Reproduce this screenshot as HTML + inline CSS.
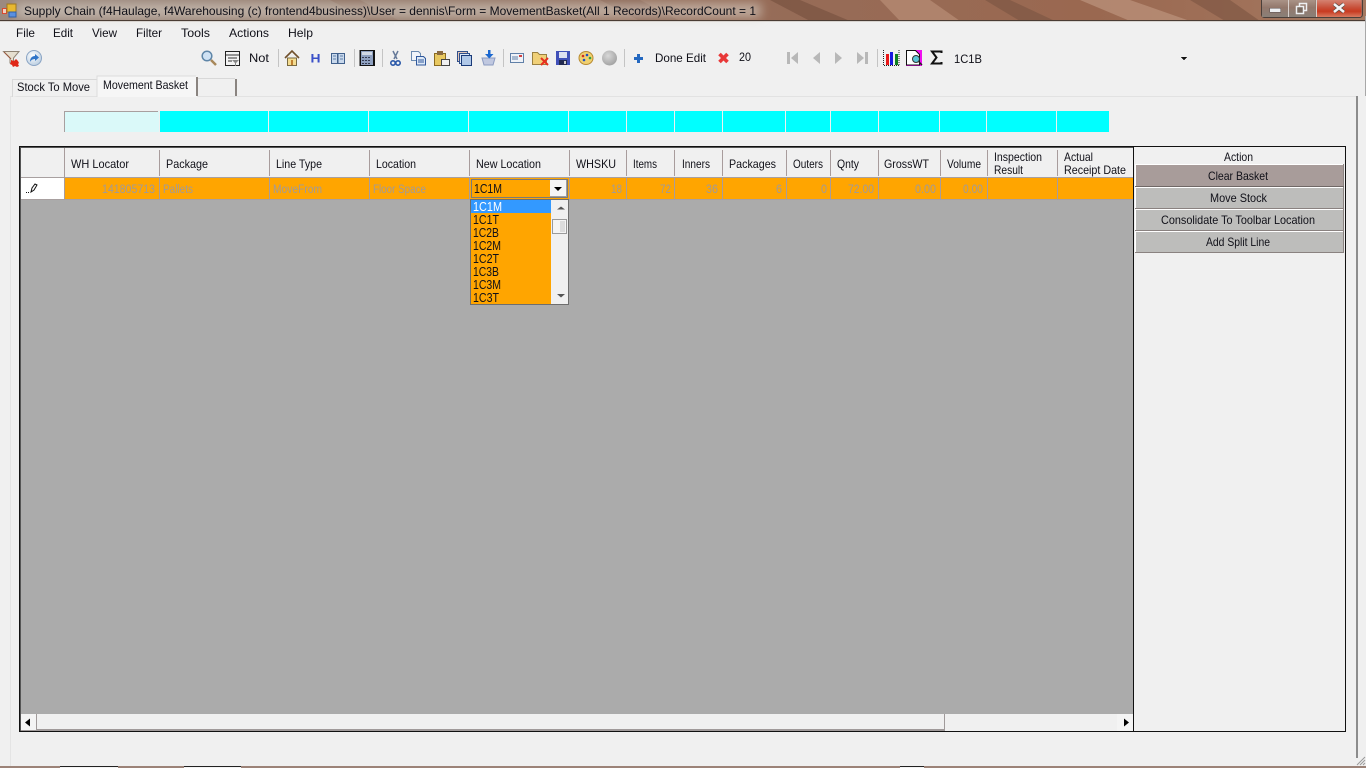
<!DOCTYPE html>
<html><head><meta charset="utf-8"><title>Supply Chain</title>
<style>
html,body{margin:0;padding:0;width:1366px;height:768px;overflow:hidden;background:#f0f0f0}
svg{display:block}
text{font-family:"Liberation Sans",sans-serif;font-size:12px;fill:#101018;white-space:pre}
.c{shape-rendering:crispEdges}
.g{fill:#a09a9a;font-size:11.5px}
.d{font-size:12.500px}
</style></head><body>
<svg width="1366" height="768" viewBox="0 0 1366 768" xmlns="http://www.w3.org/2000/svg">
<defs>
<linearGradient id="tb" x1="0" y1="0" x2="1" y2="0"><stop offset="0" stop-color="#9c8a80"/><stop offset=".3" stop-color="#94796a"/><stop offset=".55" stop-color="#966c58"/><stop offset=".8" stop-color="#9a6850"/><stop offset="1" stop-color="#a47860"/></linearGradient>
<linearGradient id="cl" x1="0" y1="0" x2="0" y2="1"><stop offset="0" stop-color="#d89080"/><stop offset=".5" stop-color="#c8503a"/><stop offset=".7" stop-color="#c83a20"/><stop offset="1" stop-color="#d87a60"/></linearGradient>
<linearGradient id="mn" x1="0" y1="0" x2="0" y2="1"><stop offset="0" stop-color="#b09a8e"/><stop offset=".5" stop-color="#93786c"/><stop offset="1" stop-color="#8a8078"/></linearGradient>
<filter id="bl" x="-10%" y="-100%" width="120%" height="300%"><feGaussianBlur stdDeviation="5"/></filter>
<radialGradient id="ball" cx=".4" cy=".35" r=".7"><stop offset="0" stop-color="#d8d8d8"/><stop offset="1" stop-color="#a0a0a0"/></radialGradient>
<radialGradient id="blue" cx=".4" cy=".35" r=".7"><stop offset="0" stop-color="#ffffff"/><stop offset="1" stop-color="#b8cce0"/></radialGradient>
</defs>

<!-- title bar -->
<rect class="c" width="1366" height="21" fill="url(#tb)"/>
<g opacity=".8">
<polygon points="770,0 800,0 850,21 810,21" fill="#7d5644"/>
<polygon points="880,0 930,0 960,21 900,21" fill="#b58a72"/>
<polygon points="985,0 1010,0 1055,21 1020,21" fill="#825a46"/>
<polygon points="1080,0 1130,0 1190,21 1130,21" fill="#b98f78"/>
<polygon points="1190,0 1230,0 1260,21 1225,21" fill="#845b47"/>
<polygon points="600,0 640,0 680,21 640,21" fill="#86604f"/>
<polygon points="330,0 360,0 400,21 370,21" fill="#8a6a5a"/>
</g>
<rect x="16" y="3" width="745" height="15" fill="#d8d2c8" opacity=".6" filter="url(#bl)"/>
<rect class="c" y="20" width="1366" height="1" fill="#4a3c34"/>
<rect class="c" y="21" width="1366" height="1" fill="#d8d4d0"/>
<!-- app icon -->
<g class="c"><rect x="2" y="8" width="5" height="6" fill="#d84a30"/><rect x="3" y="9" width="3" height="4" fill="#f0d0c0"/><rect x="7" y="4" width="9" height="8" fill="#e8b830" stroke="#a07820" stroke-width="1"/><rect x="9" y="12" width="7" height="5" fill="#5a90e0" stroke="#3060a8" stroke-width="1"/></g>
<text x="24" y="15" textLength="732" lengthAdjust="spacingAndGlyphs">Supply Chain (f4Haulage, f4Warehousing (c) frontend4business)\User = dennis\Form = MovementBasket(All 1 Records)\RecordCount = 1</text>
<!-- window buttons -->
<g>
<rect x="1261.500" y="-2" width="101" height="19.500" rx="3" fill="#8f7568" stroke="#4a3f3a"/>
<rect x="1262" y="-2" width="26" height="19" fill="url(#mn)"/>
<rect x="1289" y="-2" width="26.500" height="19" fill="url(#mn)"/>
<rect x="1316.500" y="-2" width="45" height="19" rx="2" fill="url(#cl)"/>
<rect class="c" x="1288" width="1" height="17" fill="#d8d0cc"/><rect class="c" x="1316" width="1" height="17" fill="#d8d0cc"/>
<rect class="c" x="1269.500" y="8" width="11" height="4" fill="#eef0f2" stroke="#5a5050" stroke-width=".5"/>
<rect x="1299.500" y="3.500" width="7" height="7" fill="none" stroke="#eef0f2" stroke-width="1.500"/>
<rect x="1296.500" y="6.500" width="7" height="7" fill="#7a6a60" stroke="#eef0f2" stroke-width="1.500"/>
<path d="M1334 4 L1344 12 M1344 4 L1334 12" stroke="#5a4a44" stroke-width="4"/>
<path d="M1334 4 L1344 12 M1344 4 L1334 12" stroke="#f4f4f6" stroke-width="2.600"/>
</g>

<!-- menu -->
<text x="16" y="37" textLength="19" lengthAdjust="spacingAndGlyphs">File</text>
<text x="53" y="37" textLength="20" lengthAdjust="spacingAndGlyphs">Edit</text>
<text x="92" y="37" textLength="25" lengthAdjust="spacingAndGlyphs">View</text>
<text x="136" y="37" textLength="26" lengthAdjust="spacingAndGlyphs">Filter</text>
<text x="181" y="37" textLength="29" lengthAdjust="spacingAndGlyphs">Tools</text>
<text x="229" y="37" textLength="40" lengthAdjust="spacingAndGlyphs">Actions</text>
<text x="288" y="37" textLength="25" lengthAdjust="spacingAndGlyphs">Help</text>

<!-- toolbar icons -->
<path d="M3.500 51.500H19L13.500 58V64L10 63V58Z" fill="#e6dfcf" stroke="#8f8474"/>
<path d="M4 52l7 7" stroke="#9a5a40" stroke-width="1"/>
<path d="M11 60l3 1 2-2 2 2 1 2-1 1 1 2-2 1-2-1-2 1-1-2-2-1 1-2z" fill="#e02818"/>
<circle cx="34" cy="58" r="7.500" fill="url(#blue)" stroke="#8aa4c4"/>
<path d="M30 62c0-4 2-6 5-6v-2l4 3.500-4 3.500v-2c-2 0-4 1-5 3z" fill="#2f74c8"/>
<circle cx="207" cy="56" r="4.800" fill="#cfe2f4" stroke="#5f86a8" stroke-width="1.500"/>
<path d="M211 60l5 5" stroke="#a8885a" stroke-width="2.500"/>
<rect class="c" x="225.500" y="51.500" width="14" height="14" fill="#f4f4f4" stroke="#222"/>
<path d="M226 55h13M228 58h9M228 61h4" stroke="#333" fill="none"/>
<path d="M232 60h7l-3 3v3h-1v-3z" fill="#888"/>
<text x="249" y="62" textLength="20" lengthAdjust="spacingAndGlyphs">Not</text>
<rect class="c" x="278" y="49" width="1" height="18" fill="#c4c4c4"/>
<path d="M285 58l7-7 7 7" fill="none" stroke="#70502c" stroke-width="1.600"/>
<rect x="287.500" y="58" width="9" height="7.500" fill="#f4dc90" stroke="#7a6a40"/>
<rect class="c" x="291" y="60" width="2" height="5" fill="#c08030"/>
<text x="310.500" y="62.500" textLength="10" lengthAdjust="spacingAndGlyphs" style="fill:#3a50c8;font-weight:bold">H</text>
<path d="M331.500 53.500h6v10h-6zM338 53.500h6.500v10H338z" fill="#c8d8ec" stroke="#40608c"/>
<path d="M333 56h3M333 59h3M340 56h3M340 59h3" stroke="#6080a8"/>
<rect class="c" x="354" y="49" width="1" height="18" fill="#c4c4c4"/>
<rect class="c" x="359.500" y="50" width="15.500" height="16" fill="#111"/>
<rect class="c" x="361" y="51" width="12" height="14" fill="#8ea0c0"/>
<rect class="c" x="362" y="52" width="10" height="3" fill="#d0d8e4"/>
<path class="c" d="M362 57h2v1h-2zM365 57h2v1h-2zM368 57h2v1h-2zM362 60h2v1h-2zM365 60h2v1h-2zM368 60h2v1h-2zM362 63h2v1h-2zM365 63h2v1h-2zM368 63h2v1h-2z" fill="#333a50"/>
<rect class="c" x="382" y="49" width="1" height="18" fill="#c4c4c4"/>
<path d="M393 51l4 8M398 51l-4 8" stroke="#667a99" stroke-width="1.500"/>
<circle cx="393" cy="63" r="2.200" fill="none" stroke="#2a58a8" stroke-width="1.600"/><circle cx="398" cy="63" r="2.200" fill="none" stroke="#2a58a8" stroke-width="1.600"/>
<path d="M411.500 51.500h7l2 2v7h-9z" fill="#f0f4fa" stroke="#6a8ab0"/>
<path d="M416.500 56.500h7l2 2v6.500h-9z" fill="#dce8f6" stroke="#30589c"/>
<path d="M418 60h6M418 62h6" stroke="#30589c"/>
<rect x="434.500" y="53.500" width="11" height="12" fill="#e8c860" stroke="#8a6a20"/>
<rect class="c" x="437" y="51" width="6" height="4" fill="#8a6a40"/>
<path d="M441.500 59.500h8v6h-8z" fill="#f0f0f0" stroke="#444"/>
<rect x="457.500" y="51.500" width="10" height="10" fill="#e4c8b8" stroke="#30508c"/>
<rect x="459.500" y="53.500" width="10" height="10" fill="#dce8f8" stroke="#30508c"/>
<rect x="461.500" y="55.500" width="10" height="10" fill="#b0c8e8" stroke="#1a3a78"/>
<path d="M482 58h13l-2 7h-9z" fill="#c0c8e0" stroke="#8a9ac0"/>
<path d="M488 50h2.500v4h3l-4.200 4.500-4.300-4.500h3z" fill="#1c68d0"/>
<rect class="c" x="503" y="49" width="1" height="18" fill="#c4c4c4"/>
<rect x="510.500" y="53.500" width="13" height="9" fill="#eef2f8" stroke="#6080a8"/>
<path d="M512 57h6M512 59h6" stroke="#6080a8"/><rect class="c" x="519" y="55" width="3" height="2" fill="#d04040"/>
<path d="M532.500 52.500h5l2 2h7v10h-14z" fill="#f0d078" stroke="#9a8040"/>
<path d="M541 58l7 7M548 58l-7 7" stroke="#e83020" stroke-width="2"/>
<rect class="c" x="556" y="51" width="14" height="14" fill="#4050b8"/>
<rect class="c" x="559" y="52" width="8" height="6" fill="#dde0f0"/>
<rect class="c" x="559" y="60" width="8" height="5" fill="#222a50"/><rect class="c" x="564" y="61" width="2" height="3" fill="#ccc"/>
<ellipse cx="586" cy="58" rx="7" ry="6.500" fill="#f0d070" stroke="#b88a30"/>
<circle cx="583" cy="56" r="1.300" fill="#d03020"/><circle cx="587" cy="55" r="1.300" fill="#2050c0"/><circle cx="590" cy="58" r="1.300" fill="#30a040"/><circle cx="584" cy="60" r="1.300" fill="#2050c0"/>
<circle cx="609.500" cy="58" r="7.500" fill="url(#ball)"/>
<rect class="c" x="624" y="49" width="1" height="18" fill="#c4c4c4"/>
<path class="c" d="M637 54h3v3h3v3h-3v3h-3v-3h-3v-3h3z" fill="#2468c0"/>
<text x="655" y="62" textLength="51" lengthAdjust="spacingAndGlyphs">Done Edit</text>
<path d="M719.500 54l8 8M727.500 54l-8 8" stroke="#e83838" stroke-width="3.600"/>
<text x="739" y="61" textLength="12" lengthAdjust="spacingAndGlyphs">20</text>
<!-- nav -->
<g fill="#b8b8b8">
<rect class="c" x="787" y="52" width="3" height="12"/><path d="M798 52v12l-7-6z"/>
<path d="M820 52v12l-7-6z"/><path d="M835 52v12l7-6z"/>
<path d="M857 52v12l7-6z"/><rect class="c" x="865" y="52" width="3" height="12"/>
</g>
<rect class="c" x="877" y="49" width="1" height="18" fill="#c4c4c4"/>
<path d="M883.500 50v16M899 50v16" stroke="#222" stroke-dasharray="1 1"/>
<path d="M884 65.500h15" stroke="#222" stroke-dasharray="1 1"/>
<rect class="c" x="886" y="54" width="3" height="11" fill="#e81818"/>
<rect class="c" x="890" y="52" width="3" height="13" fill="#1818e0"/>
<rect class="c" x="895" y="54" width="3" height="11" fill="#108020"/>
<rect class="c" x="906" y="50" width="16" height="16" fill="#f010f0"/>
<path d="M906.500 50.500h9l4 4v10.500h-13z" fill="#fff" stroke="#111"/>
<circle cx="916" cy="59" r="3.500" fill="#5cc8d8" stroke="#333"/><path d="M919 62l3 3" stroke="#222" stroke-width="1.500"/>
<path d="M941.500 53v-1.500H932l4.500 6-4.500 6h9.500V62" fill="none" stroke="#111" stroke-width="2"/>
<text x="954" y="63" textLength="28" lengthAdjust="spacingAndGlyphs">1C1B</text>
<path class="c" d="M1181 57h6l-3 3.500z" fill="#111"/>

<!-- panel -->
<rect class="c" x="10" y="96" width="1347" height="1" fill="#e2e2e2"/>
<rect class="c" x="10" y="96" width="1" height="670" fill="#e4e4e4"/>
<rect class="c" x="1356" y="96" width="2" height="662" fill="#8c8c8c"/>
<!-- tabs -->
<path d="M12.500 97V79.500H97" fill="#f0f0f0" stroke="#d8d8d8"/>
<text x="17" y="91" textLength="73" lengthAdjust="spacingAndGlyphs">Stock To Move</text>
<rect class="c" x="97" y="76" width="100" height="21" fill="#f6f6f6"/>
<path class="c" d="M97 97V76H196" fill="none" stroke="#dcdcdc"/>
<rect class="c" x="196" y="77" width="2" height="19" fill="#8a8480"/>
<text x="103" y="89" textLength="85" lengthAdjust="spacingAndGlyphs">Movement Basket</text>
<path class="c" d="M198 78.500H235" fill="none" stroke="#d8d8d8"/>
<rect class="c" x="235" y="79" width="2" height="17" fill="#8a8480"/>

<!-- cyan strip -->
<g class="c">
<rect x="64" y="111" width="95" height="21" fill="#daf9f9"/>
<rect x="64" y="111" width="1" height="21" fill="#a89f9f"/><rect x="64" y="111" width="94" height="1" fill="#a89f9f"/>
<rect x="160" y="111" width="108" height="21" fill="#0ff"/>
<rect x="269" y="111" width="99" height="21" fill="#0ff"/>
<rect x="369" y="111" width="99" height="21" fill="#0ff"/>
<rect x="469" y="111" width="99" height="21" fill="#0ff"/>
<rect x="569" y="111" width="57" height="21" fill="#0ff"/>
<rect x="627" y="111" width="47" height="21" fill="#0ff"/>
<rect x="675" y="111" width="47" height="21" fill="#0ff"/>
<rect x="723" y="111" width="62" height="21" fill="#0ff"/>
<rect x="786" y="111" width="44" height="21" fill="#0ff"/>
<rect x="831" y="111" width="47" height="21" fill="#0ff"/>
<rect x="879" y="111" width="60" height="21" fill="#0ff"/>
<rect x="940" y="111" width="46" height="21" fill="#0ff"/>
<rect x="987" y="111" width="69" height="21" fill="#0ff"/>
<rect x="1057" y="111" width="52" height="21" fill="#0ff"/>
</g>

<!-- grid -->
<g class="c">
<rect x="20" y="147" width="1114" height="584" fill="#ababab"/>
<rect x="21" y="148" width="1112" height="30" fill="#f0f0f0"/>
<rect x="21" y="177" width="1112" height="1" fill="#a8a0a0"/>
<rect x="21" y="178" width="43" height="21" fill="#fff"/>
<rect x="65" y="178" width="1068" height="21" fill="#ffa500"/>
<rect x="21" y="199" width="1112" height="1" fill="#a8a0a0"/>
<!-- separators -->
<g fill="#a89c9c">
<rect x="64" y="148" width="1" height="51"/>
<rect x="159" y="150" width="1" height="26"/><rect x="159" y="178" width="1" height="21"/>
<rect x="269" y="150" width="1" height="26"/><rect x="269" y="178" width="1" height="21"/>
<rect x="369" y="150" width="1" height="26"/><rect x="369" y="178" width="1" height="21"/>
<rect x="469" y="150" width="1" height="26"/><rect x="469" y="178" width="1" height="21"/>
<rect x="569" y="150" width="1" height="26"/><rect x="569" y="178" width="1" height="21"/>
<rect x="626" y="150" width="1" height="26"/><rect x="626" y="178" width="1" height="21"/>
<rect x="674" y="150" width="1" height="26"/><rect x="674" y="178" width="1" height="21"/>
<rect x="722" y="150" width="1" height="26"/><rect x="722" y="178" width="1" height="21"/>
<rect x="786" y="150" width="1" height="26"/><rect x="786" y="178" width="1" height="21"/>
<rect x="830" y="150" width="1" height="26"/><rect x="830" y="178" width="1" height="21"/>
<rect x="878" y="150" width="1" height="26"/><rect x="878" y="178" width="1" height="21"/>
<rect x="940" y="150" width="1" height="26"/><rect x="940" y="178" width="1" height="21"/>
<rect x="987" y="150" width="1" height="26"/><rect x="987" y="178" width="1" height="21"/>
<rect x="1057" y="150" width="1" height="26"/><rect x="1057" y="178" width="1" height="21"/>
</g>
<!-- borders -->
<rect x="19" y="146" width="1115" height="1" fill="#111"/>
<rect x="19" y="146" width="1" height="586" fill="#111"/>
<rect x="20" y="147" width="1113" height="1" fill="#555"/>
<rect x="20" y="147" width="1" height="584" fill="#555"/>
<rect x="19" y="731" width="1327" height="1" fill="#111"/>
<rect x="1133" y="146" width="1" height="586" fill="#111"/>
<rect x="1134" y="146" width="212" height="1" fill="#111"/>
<rect x="1345" y="146" width="1" height="586" fill="#111"/>
<!-- scrollbar -->
<rect x="21" y="714" width="1112" height="17" fill="#f0f0f0"/>
<rect x="21" y="714" width="15" height="16" fill="#f4f4f4"/>
<rect x="36" y="714" width="1" height="16" fill="#a09a9a"/>
<rect x="37" y="714" width="907" height="15" fill="#f0f0f0"/>
<rect x="37" y="729" width="907" height="2" fill="#a09a9a"/>
<rect x="944" y="714" width="1" height="17" fill="#a09a9a"/>
<rect x="1117" y="714" width="16" height="17" fill="#f4f4f4"/>
<rect x="21" y="730" width="16" height="1" fill="#a09a9a"/>
</g>
<path d="M25 722.500l5-4v8z" fill="#000"/>
<path d="M1129 722.500l-5-4v8z" fill="#000"/>

<!-- header text -->
<text x="71" y="168" textLength="58" lengthAdjust="spacingAndGlyphs">WH Locator</text>
<text x="166" y="168" textLength="42" lengthAdjust="spacingAndGlyphs">Package</text>
<text x="276" y="168" textLength="46" lengthAdjust="spacingAndGlyphs">Line Type</text>
<text x="376" y="168" textLength="40" lengthAdjust="spacingAndGlyphs">Location</text>
<text x="476" y="168" textLength="65" lengthAdjust="spacingAndGlyphs">New Location</text>
<text x="576" y="168" textLength="40" lengthAdjust="spacingAndGlyphs">WHSKU</text>
<text x="633" y="168" textLength="24" lengthAdjust="spacingAndGlyphs">Items</text>
<text x="682" y="168" textLength="28" lengthAdjust="spacingAndGlyphs">Inners</text>
<text x="729" y="168" textLength="47" lengthAdjust="spacingAndGlyphs">Packages</text>
<text x="793" y="168" textLength="30" lengthAdjust="spacingAndGlyphs">Outers</text>
<text x="837" y="168" textLength="22" lengthAdjust="spacingAndGlyphs">Qnty</text>
<text x="884" y="168" textLength="45" lengthAdjust="spacingAndGlyphs">GrossWT</text>
<text x="947" y="168" textLength="34" lengthAdjust="spacingAndGlyphs">Volume</text>
<text x="994" y="161" textLength="48" lengthAdjust="spacingAndGlyphs">Inspection</text>
<text x="994" y="174" textLength="29" lengthAdjust="spacingAndGlyphs">Result</text>
<text x="1064" y="161" textLength="29" lengthAdjust="spacingAndGlyphs">Actual</text>
<text x="1064" y="174" textLength="62" lengthAdjust="spacingAndGlyphs">Receipt Date</text>

<!-- pencil -->
<path d="M31 192l1-4 3-4 2 1-3 5z" fill="#fff" stroke="#111"/>
<path class="c" d="M26 192h1v1h-1zM28 192h1v1h-1z" fill="#111"/>

<!-- row text -->
<text class="g" x="102" y="193" textLength="53" lengthAdjust="spacingAndGlyphs">141805713</text>
<text class="g" x="163" y="193" textLength="30" lengthAdjust="spacingAndGlyphs">Pallets</text>
<text class="g" x="273" y="193" textLength="49" lengthAdjust="spacingAndGlyphs">MoveFrom</text>
<text class="g" x="373" y="193" textLength="53" lengthAdjust="spacingAndGlyphs">Floor Space</text>
<text class="g" x="611" y="193" textLength="11" lengthAdjust="spacingAndGlyphs">18</text>
<text class="g" x="660" y="193" textLength="11" lengthAdjust="spacingAndGlyphs">72</text>
<text class="g" x="706" y="193" textLength="12" lengthAdjust="spacingAndGlyphs">36</text>
<text class="g" x="776" y="193" textLength="6" lengthAdjust="spacingAndGlyphs">6</text>
<text class="g" x="821" y="193" textLength="6" lengthAdjust="spacingAndGlyphs">0</text>
<text class="g" x="848" y="193" textLength="26" lengthAdjust="spacingAndGlyphs">72.00</text>
<text class="g" x="915" y="193" textLength="21" lengthAdjust="spacingAndGlyphs">0.00</text>
<text class="g" x="963" y="193" textLength="20" lengthAdjust="spacingAndGlyphs">0.00</text>

<!-- combo -->
<g class="c">
<rect x="471" y="179" width="97" height="19" fill="#7a7a7a"/>
<rect x="472" y="180" width="95" height="17" fill="#ffa500"/>
<rect x="550" y="180" width="17" height="17" fill="#f6f6f6"/>
<rect x="550" y="196" width="17" height="1" fill="#a0a0a0"/>
<rect x="566" y="180" width="1" height="17" fill="#a0a0a0"/>
</g>
<path d="M554 187h8l-4 4z" fill="#000"/>
<text class="d" x="474" y="193" textLength="28" lengthAdjust="spacingAndGlyphs">1C1M</text>
<!-- dropdown -->
<g class="c">
<rect x="470" y="199" width="99" height="106" fill="#6e6e6e"/>
<rect x="471" y="200" width="97" height="104" fill="#f0f0f0"/>
<rect x="471" y="200" width="80" height="104" fill="#ffa500"/>
<rect x="471" y="200" width="80" height="13" fill="#3399ff"/>
<rect x="552" y="219" width="15" height="15" fill="#9a9a9a"/>
<rect x="553" y="220" width="13" height="13" fill="#f4f4f4"/>
<rect x="560" y="221" width="5" height="11" fill="#dcdcdc"/>
</g>
<path d="M557 209.500h8l-4-3z" fill="#555"/>
<path d="M557 294h8l-4 3.500z" fill="#555"/>
<text class="d" x="473" y="211" textLength="29" lengthAdjust="spacingAndGlyphs" style="fill:#fff">1C1M</text>
<text class="d" x="473" y="224" textLength="26" lengthAdjust="spacingAndGlyphs">1C1T</text>
<text class="d" x="473" y="237" textLength="26" lengthAdjust="spacingAndGlyphs">1C2B</text>
<text class="d" x="473" y="250" textLength="28" lengthAdjust="spacingAndGlyphs">1C2M</text>
<text class="d" x="473" y="263" textLength="26" lengthAdjust="spacingAndGlyphs">1C2T</text>
<text class="d" x="473" y="276" textLength="26" lengthAdjust="spacingAndGlyphs">1C3B</text>
<text class="d" x="473" y="289" textLength="28" lengthAdjust="spacingAndGlyphs">1C3M</text>
<text class="d" x="473" y="302" textLength="26" lengthAdjust="spacingAndGlyphs">1C3T</text>

<!-- action panel -->
<text x="1224" y="161" textLength="29" lengthAdjust="spacingAndGlyphs">Action</text>
<g class="c">
<rect x="1135" y="164" width="209" height="23" fill="#8a8280"/><rect x="1135" y="164" width="208" height="1" fill="#fff"/><rect x="1135" y="164" width="1" height="22" fill="#fff"/><rect x="1136" y="165" width="207" height="21" fill="#a89c9a"/>
<rect x="1135" y="186" width="209" height="1" fill="#706866"/>
<rect x="1135" y="187" width="209" height="22" fill="#8a8280"/><rect x="1135" y="187" width="208" height="1" fill="#fff"/><rect x="1135" y="187" width="1" height="21" fill="#fff"/><rect x="1136" y="188" width="207" height="20" fill="#bdbdbb"/>
<rect x="1135" y="209" width="209" height="22" fill="#8a8280"/><rect x="1135" y="209" width="208" height="1" fill="#fff"/><rect x="1135" y="209" width="1" height="21" fill="#fff"/><rect x="1136" y="210" width="207" height="20" fill="#bdbdbb"/>
<rect x="1135" y="231" width="209" height="22" fill="#8a8280"/><rect x="1135" y="231" width="208" height="1" fill="#fff"/><rect x="1135" y="231" width="1" height="21" fill="#fff"/><rect x="1136" y="232" width="207" height="20" fill="#bdbdbb"/>
</g>
<text x="1208" y="180" textLength="60" lengthAdjust="spacingAndGlyphs">Clear Basket</text>
<text x="1210" y="202" textLength="57" lengthAdjust="spacingAndGlyphs">Move Stock</text>
<text x="1161" y="224" textLength="154" lengthAdjust="spacingAndGlyphs">Consolidate To Toolbar Location</text>
<text x="1206" y="246" textLength="64" lengthAdjust="spacingAndGlyphs">Add Split Line</text>

<!-- grip & right edge -->
<path d="M1357 765l8-8M1360 765l5-5M1363 765l2-2" stroke="#9a9a9a" stroke-width="1"/>
<rect class="c" x="1365" y="16" width="1" height="80" fill="#a8a8a8"/>
<!-- bottom strip -->
<g class="c">
<rect y="766" width="1366" height="2" fill="#9c8378"/>
<rect x="60" y="766" width="58" height="2" fill="#f4f4f4"/><rect x="60" y="766" width="58" height="1" fill="#222"/>
<rect x="184" y="766" width="57" height="2" fill="#f4f4f4"/><rect x="184" y="766" width="57" height="1" fill="#222"/>
<rect x="900" y="766" width="24" height="2" fill="#f4f4f4"/><rect x="900" y="766" width="24" height="1" fill="#222"/>
</g>
</svg>
</body></html>
